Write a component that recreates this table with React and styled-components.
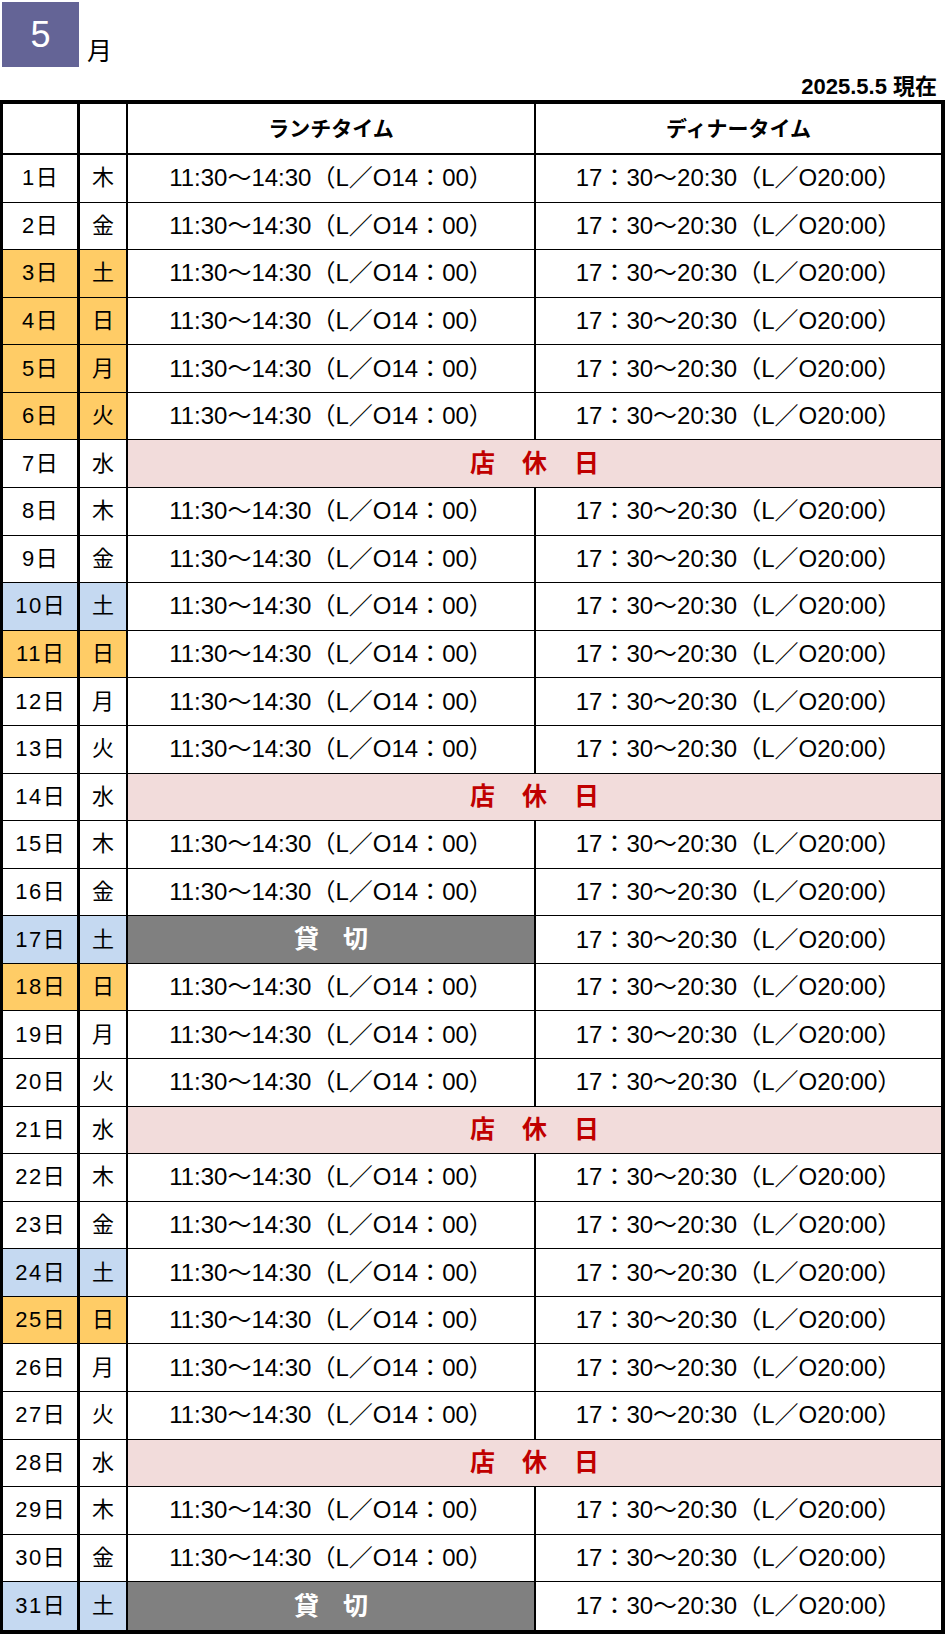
import React from "react";
import styled, { createGlobalStyle } from "styled-components";

const GlobalStyle = createGlobalStyle`
  body {
    margin: 0;
    background: #fff;
    color: #000;
    font-family: "Liberation Sans", "Noto Sans CJK JP", sans-serif;
  }
`;

const Page = styled.div`
  width: 945px;
`;

const TitleRow = styled.div`
  height: 67px;
  box-sizing: border-box;
  padding: 2px 0 0 2px;
  display: flex;
  align-items: flex-end;
  gap: 8px;
`;

const MonthBox = styled.div`
  width: 77px;
  height: 65px;
  background: #646496;
  color: #fff;
  display: flex;
  align-items: center;
  justify-content: center;
  font-size: 36px;
`;

const MonthUnit = styled.span`
  font-size: 25px;
  line-height: 1;
  margin-bottom: 3px;
`;

const AsOf = styled.div`
  height: 33px;
  box-sizing: border-box;
  padding: 7px 8px 0 0;
  text-align: right;
  font-size: 22px;
  font-weight: bold;
  line-height: 26px;
`;

const Schedule = styled.div`
  display: flex;
  flex-direction: column;
  border: solid #000;
  border-width: 4px 4px 4px 3px;
`;

const Row = styled.div`
  display: grid;
  grid-template-columns: 77px 48px 408px 405px;
  box-sizing: border-box;
  height: ${(p) => (p.$head ? "51px" : "47.58px")};
  border-bottom: ${(p) => (p.$last ? 0 : p.$head ? 2 : 1)}px solid #000;
`;

const tones = {
  plain: "#fff",
  holiday: "#FFCC66",
  saturday: "#C5D9F1",
};

const Cell = styled.div`
  box-sizing: border-box;
  display: flex;
  align-items: center;
  justify-content: center;
  line-height: 1;
  white-space: nowrap;
`;

const DayCell = styled(Cell)`
  border-right: 3px solid #000;
  background: ${(p) => tones[p.$tone || "plain"]};
  font-size: 22px;
  letter-spacing: 1.5px;
  padding-left: 1.5px;
`;

const DowCell = styled(Cell)`
  border-right: 2px solid #000;
  background: ${(p) => tones[p.$tone || "plain"]};
  font-size: 22px;
`;

const HeadCell = styled(Cell)`
  border-right: ${(p) => (p.$end ? 0 : 2)}px solid #000;
  font-size: 21px;
  font-weight: bold;
`;

const TimeCell = styled(Cell)`
  border-right: ${(p) => (p.$end ? 0 : 2)}px solid #000;
  font-size: 24px;
`;

const ClosedCell = styled(Cell)`
  grid-column: span 2;
  background: #f2dcdb;
  color: #c00000;
  font-size: 25px;
  font-weight: bold;
  letter-spacing: 27px;
  padding-left: 27px;
`;

const RentalCell = styled(Cell)`
  border-right: 2px solid #000;
  background: #808080;
  color: #fff;
  font-size: 25px;
  font-weight: bold;
  letter-spacing: 24px;
  padding-left: 24px;
`;

const LUNCH = "11:30～14:30（L／O14：00）";
const DINNER = "17：30～20:30（L／O20:00）";
const WEEK = ["木", "金", "土", "日", "月", "火", "水"];
const HOLIDAYS = [3, 4, 5, 6];
const RENTAL = [17, 31];

const days = Array.from({ length: 31 }, (_, i) => {
  const day = i + 1;
  const dow = WEEK[i % 7];
  let tone = "plain";
  if (dow === "日" || HOLIDAYS.includes(day)) tone = "holiday";
  else if (dow === "土") tone = "saturday";
  return { day, dow, tone, closed: dow === "水", rental: RENTAL.includes(day) };
});

export default function App() {
  return (
    <Page>
      <GlobalStyle />
      <TitleRow>
        <MonthBox>5</MonthBox>
        <MonthUnit>月</MonthUnit>
      </TitleRow>
      <AsOf>2025.5.5 現在</AsOf>
      <Schedule>
        <Row $head>
          <DayCell />
          <DowCell />
          <HeadCell>ランチタイム</HeadCell>
          <HeadCell $end>ディナータイム</HeadCell>
        </Row>
        {days.map((d, i) => (
          <Row key={d.day} $last={i === days.length - 1}>
            <DayCell $tone={d.tone}>{d.day}日</DayCell>
            <DowCell $tone={d.tone}>{d.dow}</DowCell>
            {d.closed ? (
              <ClosedCell>店休日</ClosedCell>
            ) : (
              <>
                {d.rental ? <RentalCell>貸切</RentalCell> : <TimeCell>{LUNCH}</TimeCell>}
                <TimeCell $end>{DINNER}</TimeCell>
              </>
            )}
          </Row>
        ))}
      </Schedule>
    </Page>
  );
}
